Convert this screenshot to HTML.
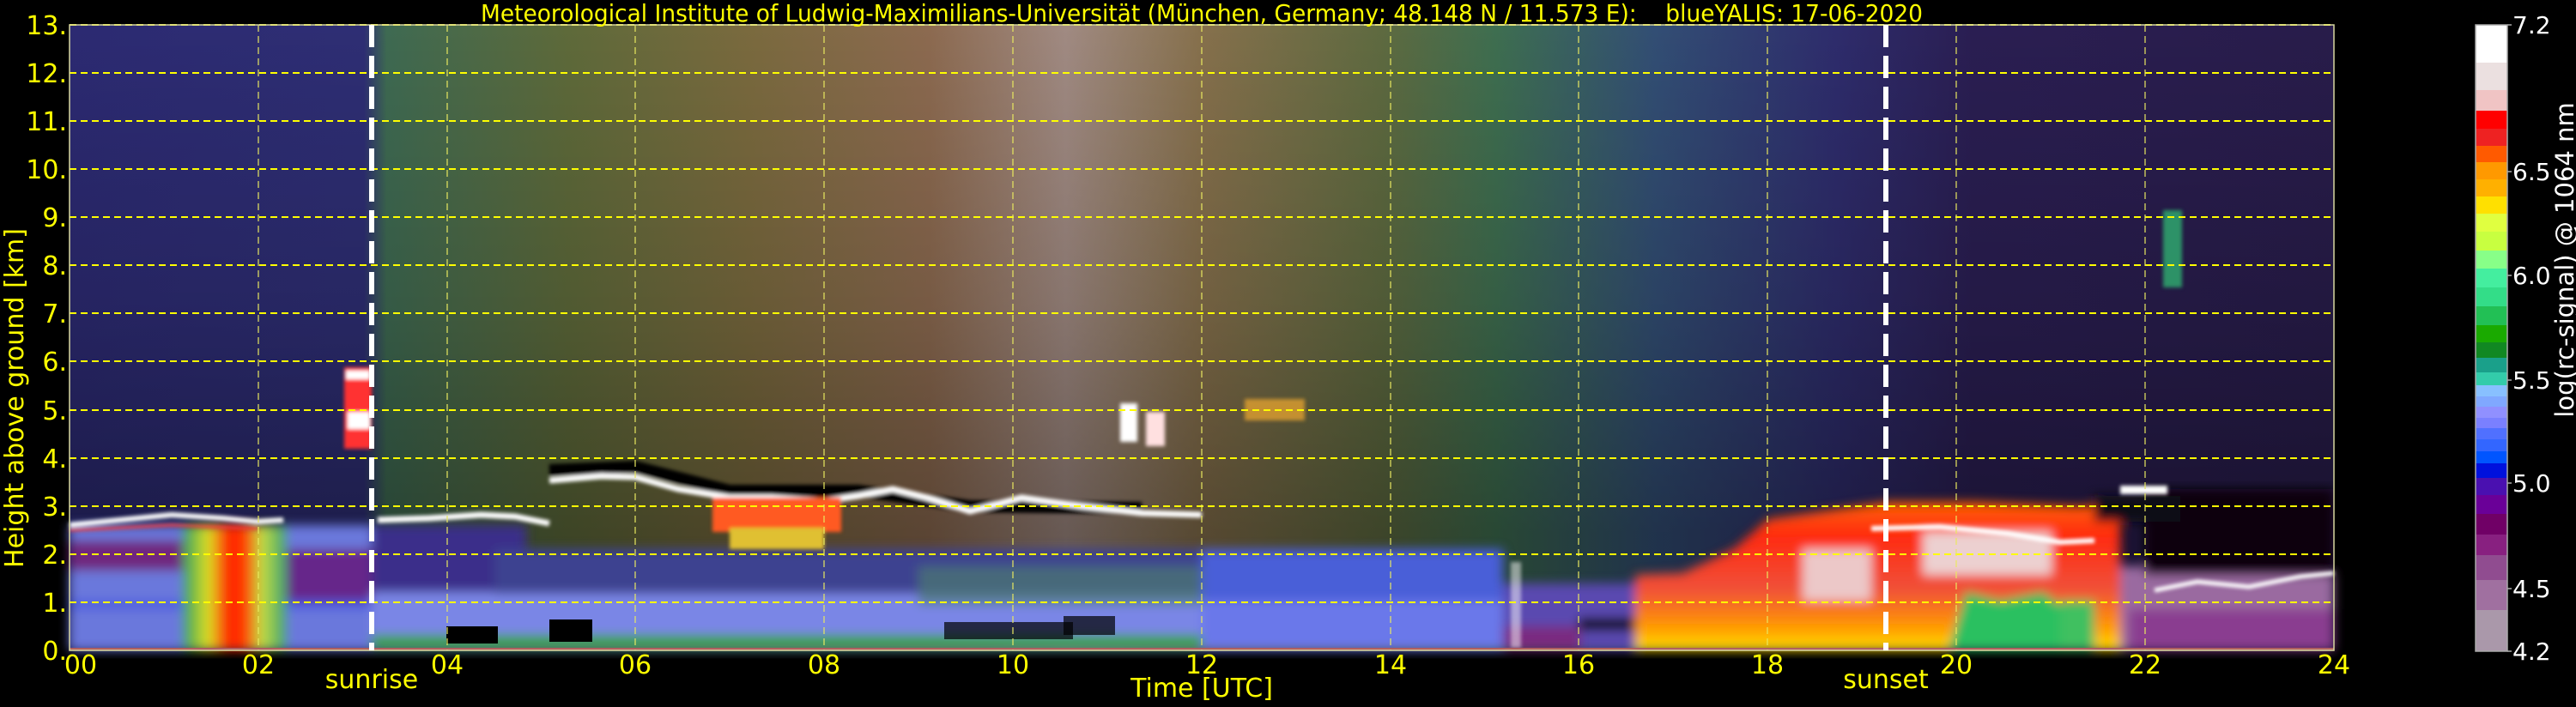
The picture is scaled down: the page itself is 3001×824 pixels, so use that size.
<!DOCTYPE html>
<html><head><meta charset="utf-8"><style>
html,body{margin:0;padding:0;background:#000;width:3001px;height:824px;overflow:hidden}
svg{display:block}
text{font-family:"DejaVu Sans","Liberation Sans",sans-serif}
</style></head><body>
<svg width="3001" height="824" viewBox="0 0 3001 824" xmlns="http://www.w3.org/2000/svg">
<defs>
<linearGradient id="up" x1="81" x2="2719" y1="0" y2="0" gradientUnits="userSpaceOnUse">
<stop offset="0" stop-color="#2c2a72"/>
<stop offset="0.13" stop-color="#2e2e74"/>
<stop offset="0.14" stop-color="#3e6a52"/>
<stop offset="0.22" stop-color="#5e6a3a"/>
<stop offset="0.3" stop-color="#7a6a3e"/>
<stop offset="0.38" stop-color="#8c6a50"/>
<stop offset="0.44" stop-color="#a08a82"/>
<stop offset="0.5" stop-color="#86704c"/>
<stop offset="0.58" stop-color="#5e6a40"/>
<stop offset="0.63" stop-color="#3e6e50"/>
<stop offset="0.7" stop-color="#324e74"/>
<stop offset="0.78" stop-color="#2e2c6c"/>
<stop offset="0.84" stop-color="#2a1e52"/>
<stop offset="1" stop-color="#281c4a"/>
</linearGradient>
<linearGradient id="vdark" x1="0" x2="0" y1="29" y2="620" gradientUnits="userSpaceOnUse">
<stop offset="0" stop-color="#000" stop-opacity="0"/>
<stop offset="0.55" stop-color="#000" stop-opacity="0.15"/>
<stop offset="1" stop-color="#000" stop-opacity="0.35"/>
</linearGradient>
<linearGradient id="aer" x1="0" x2="0" y1="580" y2="758" gradientUnits="userSpaceOnUse">
<stop offset="0" stop-color="#ff6a00"/>
<stop offset="0.25" stop-color="#ff2a10"/>
<stop offset="0.6" stop-color="#f0503a"/>
<stop offset="0.85" stop-color="#ff9a00"/>
<stop offset="1" stop-color="#ffe000"/>
</linearGradient>
<linearGradient id="plume" x1="213" x2="334" y1="0" y2="0" gradientUnits="userSpaceOnUse">
<stop offset="0" stop-color="#30a060"/>
<stop offset="0.25" stop-color="#e0e020"/>
<stop offset="0.45" stop-color="#ff1a00"/>
<stop offset="0.6" stop-color="#ff4000"/>
<stop offset="0.75" stop-color="#c8e040"/>
<stop offset="1" stop-color="#3aa070"/>
</linearGradient>
<filter id="bl" x="-5%" y="-5%" width="110%" height="110%"><feGaussianBlur stdDeviation="6"/></filter>
<filter id="bl2"><feGaussianBlur stdDeviation="2"/></filter>
</defs>

<rect x="81" y="29" width="2638" height="729" fill="url(#up)"/>
<rect x="81" y="29" width="2638" height="729" fill="url(#vdark)"/>

<g filter="url(#bl)">
<rect x="81" y="612" width="352" height="146" fill="#6a78dc"/>
<rect x="81" y="630" width="150" height="35" fill="#70287e"/>
<rect x="290" y="640" width="143" height="60" fill="#66288a"/>
<rect x="81" y="700" width="352" height="10" fill="#4a5ae0"/>
<rect x="213" y="612" width="121" height="146" fill="url(#plume)"/>
<rect x="433" y="612" width="180" height="146" fill="#3a2e8a"/>
<rect x="433" y="690" width="967" height="68" fill="#7a86e6"/>
<rect x="576" y="640" width="824" height="52" fill="#3c4290"/>
<rect x="433" y="740" width="967" height="16" fill="#3aa040"/>
<rect x="1070" y="660" width="330" height="45" fill="#4a7a70" opacity="0.7"/>
<rect x="1400" y="640" width="351" height="118" fill="#4a5ed8"/>
<rect x="1400" y="700" width="351" height="58" fill="#6a78ea"/>
<rect x="1751" y="680" width="154" height="78" fill="#5a4ab0"/>
<rect x="1751" y="730" width="90" height="28" fill="#7a2a80"/>
<rect x="1839" y="720" width="66" height="15" fill="#101010"/>
<polygon points="1905,758 1905,670 1960,668 2020,640 2060,605 2200,585 2300,585 2420,590 2470,588 2470,758" fill="url(#aer)"/>
<rect x="2100" y="640" width="80" height="60" fill="#ecc8c8"/>
<rect x="2240" y="620" width="150" height="50" fill="#ecd0d0"/>
<polygon points="2270,758 2290,690 2330,700 2380,690 2420,720 2440,758" fill="#2ac060"/>
<rect x="2400" y="700" width="40" height="58" fill="#40c060"/>
<rect x="2470" y="660" width="249" height="98" fill="#9a6aa0"/>
<rect x="2480" y="710" width="239" height="48" fill="#8a3c90"/>
<rect x="2499" y="570" width="220" height="100" fill="#0a0610"/>
<rect x="2440" y="578" width="100" height="30" fill="#0c0816"/>
</g>

<g filter="url(#bl2)">
<polyline points="81,612 140,606 200,600 260,604 300,608 330,606" fill="none" stroke="#ffffff" stroke-width="6"/>
<polyline points="81,618 200,612 300,616" fill="none" stroke="#ff4040" stroke-width="3"/>
<polyline points="440,606 500,604 560,600 600,602 640,610" fill="none" stroke="#fff" stroke-width="7"/>
<polyline points="640,548 740,544 850,572 1000,572 1130,590 1330,592" fill="none" stroke="#000" stroke-width="14"/>
<polyline points="640,560 700,555 740,556 790,570 850,580 900,580 960,584 1000,578 1040,570 1080,580 1130,596 1190,580 1260,590 1330,598 1400,600" fill="none" stroke="#fff" stroke-width="7"/>
<rect x="830" y="580" width="150" height="40" fill="#ff5a20"/>
<rect x="850" y="615" width="110" height="25" fill="#e0c030"/>
<rect x="401" y="428" width="32" height="95" fill="#ff3030"/>
<rect x="403" y="432" width="28" height="10" fill="#fff"/>
<rect x="405" y="480" width="26" height="20" fill="#fff"/>
<rect x="1305" y="470" width="20" height="45" fill="#fff"/>
<rect x="1335" y="480" width="22" height="40" fill="#ffe0e0"/>
<rect x="1450" y="465" width="70" height="25" fill="#e0a030" opacity="0.8"/>
<rect x="2520" y="245" width="22" height="90" fill="#30b070" opacity="0.8"/>
<rect x="2470" y="566" width="55" height="10" fill="#fff"/>
<polyline points="2180,616 2260,614 2340,622 2400,632 2440,630" fill="none" stroke="#fff" stroke-width="6"/>
<polyline points="2510,688 2560,678 2620,684 2680,672 2719,668" fill="none" stroke="#fff" stroke-width="5"/>
<rect x="1760" y="655" width="12" height="100" fill="#fff" opacity="0.5"/>
</g>
<rect x="520" y="730" width="60" height="20" fill="#000"/>
<rect x="640" y="722" width="50" height="26" fill="#000"/>
<rect x="1100" y="725" width="150" height="20" fill="#000" opacity="0.7"/>
<rect x="1239" y="718" width="60" height="22" fill="#000" opacity="0.7"/>
<rect x="81" y="755" width="2638" height="3" fill="#b06060"/>

<g stroke="#ffff00" stroke-width="2" stroke-dasharray="8,5" fill="none">
<line x1="81" x2="2719" y1="29" y2="29"/>
<line x1="81" x2="2719" y1="85" y2="85"/>
<line x1="81" x2="2719" y1="141" y2="141"/>
<line x1="81" x2="2719" y1="197" y2="197"/>
<line x1="81" x2="2719" y1="253" y2="253"/>
<line x1="81" x2="2719" y1="309" y2="309"/>
<line x1="81" x2="2719" y1="365" y2="365"/>
<line x1="81" x2="2719" y1="421" y2="421"/>
<line x1="81" x2="2719" y1="478" y2="478"/>
<line x1="81" x2="2719" y1="534" y2="534"/>
<line x1="81" x2="2719" y1="590" y2="590"/>
<line x1="81" x2="2719" y1="646" y2="646"/>
<line x1="81" x2="2719" y1="702" y2="702"/>
</g>
<g stroke="#e8e860" stroke-width="1.5" stroke-dasharray="8,5" fill="none" opacity="0.8">
<line x1="301" x2="301" y1="29" y2="758"/><line x1="521" x2="521" y1="29" y2="758"/>
<line x1="740" x2="740" y1="29" y2="758"/><line x1="960" x2="960" y1="29" y2="758"/>
<line x1="1180" x2="1180" y1="29" y2="758"/><line x1="1400" x2="1400" y1="29" y2="758"/>
<line x1="1620" x2="1620" y1="29" y2="758"/><line x1="1839" x2="1839" y1="29" y2="758"/>
<line x1="2059" x2="2059" y1="29" y2="758"/><line x1="2279" x2="2279" y1="29" y2="758"/>
<line x1="2499" x2="2499" y1="29" y2="758"/>
</g>
<rect x="81" y="29" width="2638" height="729" fill="none" stroke="#d8d8a0" stroke-width="1.5"/>
<line x1="433" x2="433" y1="29" y2="758" stroke="#fff" stroke-width="6" stroke-dasharray="26,10"/>
<line x1="2197" x2="2197" y1="29" y2="758" stroke="#fff" stroke-width="6" stroke-dasharray="26,10"/>

<text x="1400" y="25" font-size="28" fill="#ffff00" text-anchor="middle" textLength="1680" lengthAdjust="spacingAndGlyphs" xml:space="preserve">Meteorological Institute of Ludwig-Maximilians-Universität (München, Germany; 48.148 N / 11.573 E):    blueYALIS: 17-06-2020</text>

<g font-size="30" fill="#ffff00" text-anchor="end">
<text x="78" y="40">13.</text><text x="78" y="96">12.</text><text x="78" y="152">11.</text>
<text x="78" y="208">10.</text><text x="78" y="264">9.</text><text x="78" y="320">8.</text>
<text x="78" y="376">7.</text><text x="78" y="432">6.</text><text x="78" y="489">5.</text>
<text x="78" y="545">4.</text><text x="78" y="601">3.</text><text x="78" y="657">2.</text>
<text x="78" y="713">1.</text><text x="78" y="769">0.</text>
</g>
<text transform="translate(27,464) rotate(-90)" font-size="30" fill="#ffff00" text-anchor="middle">Height above ground [km]</text>

<g font-size="30" fill="#ffff00" text-anchor="middle">
<text x="94" y="785">00</text><text x="301" y="785">02</text><text x="521" y="785">04</text>
<text x="740" y="785">06</text><text x="960" y="785">08</text><text x="1180" y="785">10</text>
<text x="1400" y="785">12</text><text x="1620" y="785">14</text><text x="1839" y="785">16</text>
<text x="2059" y="785">18</text><text x="2279" y="785">20</text><text x="2499" y="785">22</text>
<text x="2719" y="785">24</text>
<text x="433" y="802">sunrise</text><text x="2197" y="802">sunset</text>
<text x="1400" y="812">Time [UTC]</text>
</g>

<g>
<rect x="2884" y="29" width="37" height="44" fill="#ffffff"/>
<rect x="2884" y="73" width="37" height="32" fill="#ebe0e0"/>
<rect x="2884" y="105" width="37" height="24" fill="#f0c4c4"/>
<rect x="2884" y="129" width="37" height="21" fill="#ff0000"/>
<rect x="2884" y="150" width="37" height="20" fill="#ee2222"/>
<rect x="2884" y="170" width="37" height="19" fill="#ff5a00"/>
<rect x="2884" y="189" width="37" height="20" fill="#ff9900"/>
<rect x="2884" y="209" width="37" height="20" fill="#ffb000"/>
<rect x="2884" y="229" width="37" height="20" fill="#ffe000"/>
<rect x="2884" y="249" width="37" height="21" fill="#e0ff40"/>
<rect x="2884" y="270" width="37" height="22" fill="#c8ff40"/>
<rect x="2884" y="292" width="37" height="21" fill="#88ff88"/>
<rect x="2884" y="313" width="37" height="22" fill="#44ee9f"/>
<rect x="2884" y="335" width="37" height="22" fill="#33dd88"/>
<rect x="2884" y="357" width="37" height="22" fill="#22c055"/>
<rect x="2884" y="379" width="37" height="20" fill="#1aaa00"/>
<rect x="2884" y="399" width="37" height="18" fill="#118822"/>
<rect x="2884" y="417" width="37" height="17" fill="#1aa08a"/>
<rect x="2884" y="434" width="37" height="15" fill="#33ccaa"/>
<rect x="2884" y="449" width="37" height="13" fill="#88c0ff"/>
<rect x="2884" y="462" width="37" height="12" fill="#80a8ff"/>
<rect x="2884" y="474" width="37" height="13" fill="#9090ff"/>
<rect x="2884" y="487" width="37" height="12" fill="#7a80ff"/>
<rect x="2884" y="499" width="37" height="13" fill="#5070ff"/>
<rect x="2884" y="512" width="37" height="14" fill="#3366ff"/>
<rect x="2884" y="526" width="37" height="14" fill="#0055ff"/>
<rect x="2884" y="540" width="37" height="17" fill="#0011dd"/>
<rect x="2884" y="557" width="37" height="20" fill="#4a10b0"/>
<rect x="2884" y="577" width="37" height="22" fill="#6a0098"/>
<rect x="2884" y="599" width="37" height="24" fill="#700066"/>
<rect x="2884" y="623" width="37" height="24" fill="#882080"/>
<rect x="2884" y="647" width="37" height="29" fill="#904c90"/>
<rect x="2884" y="676" width="37" height="35" fill="#a070a0"/>
<rect x="2884" y="711" width="37" height="48" fill="#aa98aa"/>
<rect x="2884" y="29" width="37" height="730" fill="none" stroke="#aaa" stroke-width="1.5"/>
<g stroke="#aaa" stroke-width="1.5">
<line x1="2921" x2="2926" y1="29" y2="29"/><line x1="2921" x2="2926" y1="200" y2="200"/>
<line x1="2921" x2="2926" y1="321" y2="321"/><line x1="2921" x2="2926" y1="443" y2="443"/>
<line x1="2921" x2="2926" y1="563" y2="563"/><line x1="2921" x2="2926" y1="686" y2="686"/>
<line x1="2921" x2="2926" y1="759" y2="759"/>
</g>
</g>
<g font-size="28" fill="#ffffff">
<text x="2927" y="39">7.2</text><text x="2927" y="210">6.5</text><text x="2927" y="331">6.0</text>
<text x="2927" y="453">5.5</text><text x="2927" y="573">5.0</text><text x="2927" y="696">4.5</text>
<text x="2927" y="769">4.2</text>
</g>
<text transform="translate(2998,303) rotate(-90)" font-size="29" fill="#ffffff" text-anchor="middle">log(rc-signal) @ 1064 nm</text>
</svg>
</body></html>
